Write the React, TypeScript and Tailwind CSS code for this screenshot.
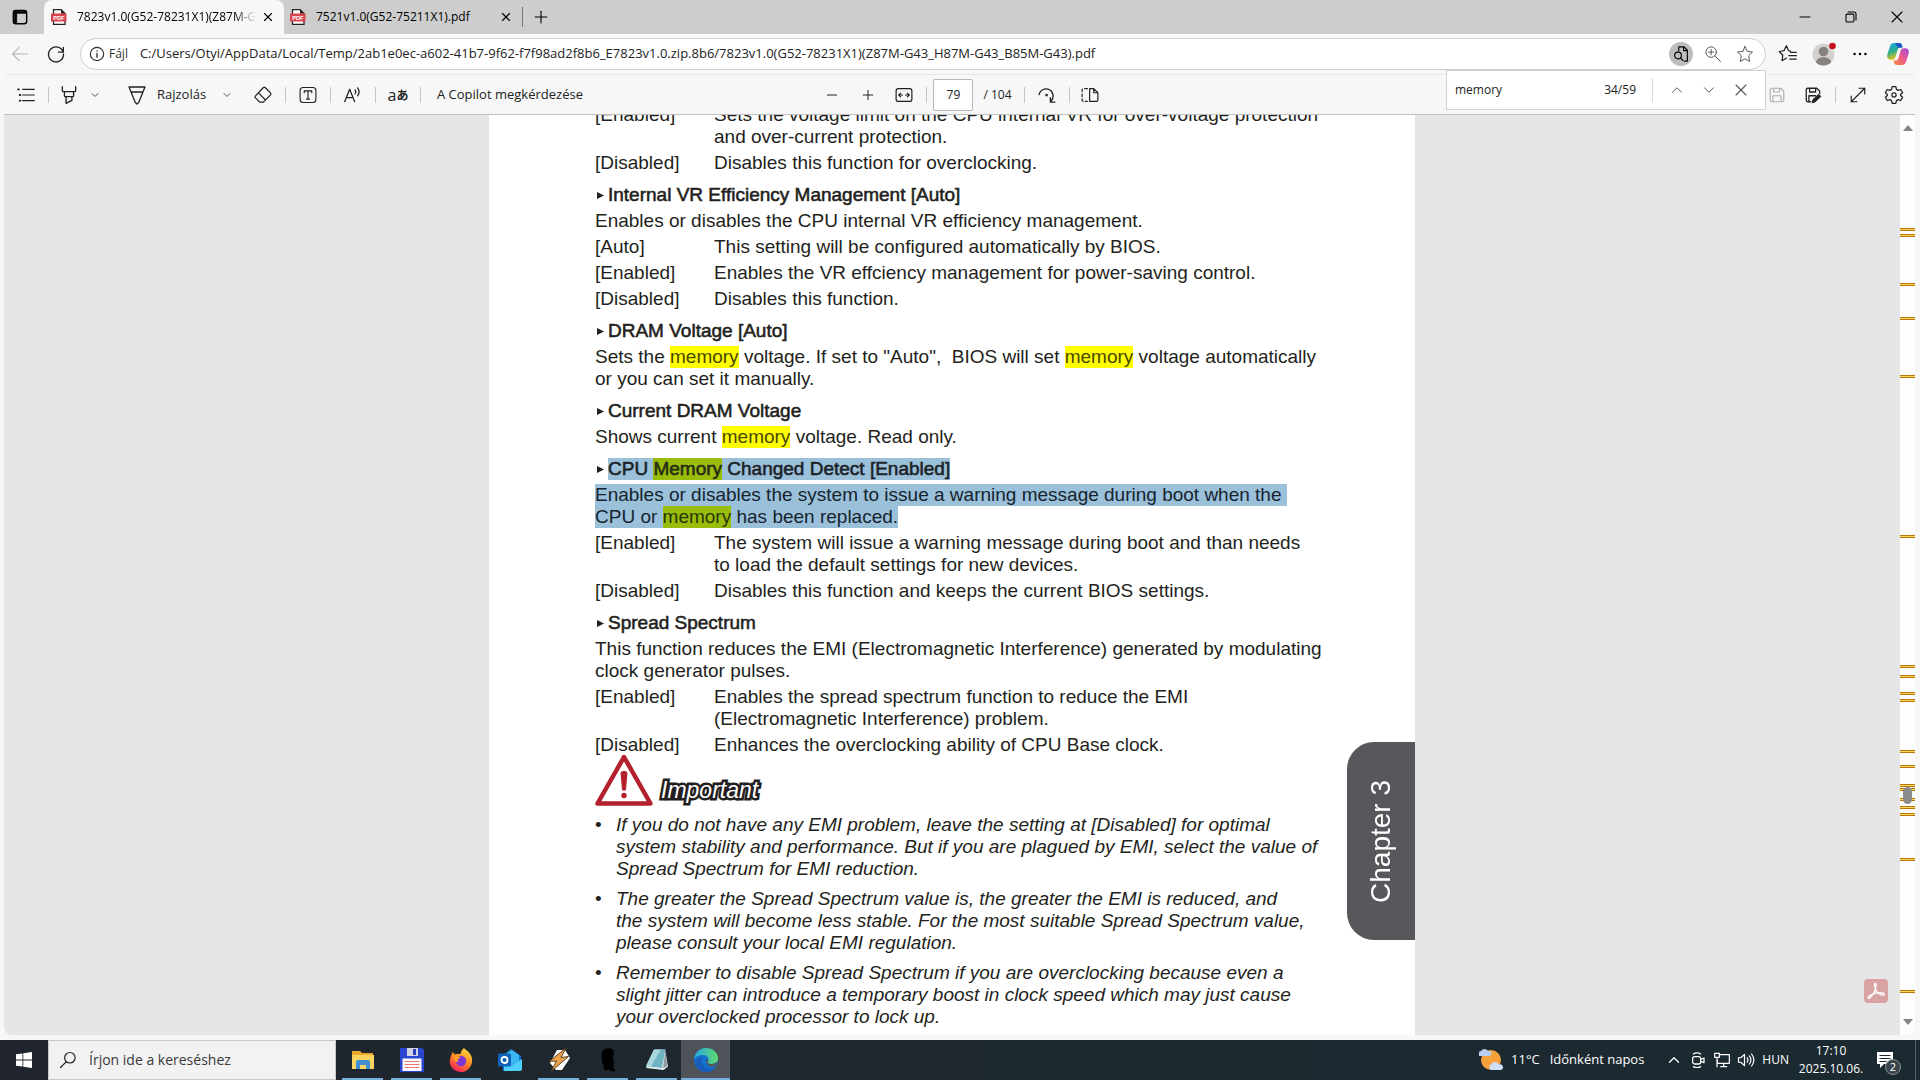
import type { ReactNode } from "react";
import { ChevronDown, ChevronUp, Minus, Plus, X } from "lucide-react";

const scrollMarks = [
	12.3, 12.9, 18.3, 22, 28.3, 45.7, 59.8, 60.9, 62.7, 63.5, 69, 70.7, 72.7, 73.2, 74.2, 75.1, 75.9,
	80.8, 95.1,
];

const notes = [
	[
		"If you do not have any EMI problem, leave the setting at [Disabled] for optimal",
		"system stability and performance. But if you are plagued by EMI, select the value of",
		"Spread Spectrum for EMI reduction.",
	],
	[
		"The greater the Spread Spectrum value is, the greater the EMI is reduced, and",
		"the system will become less stable. For the most suitable Spread Spectrum value,",
		"please consult your local EMI regulation.",
	],
	[
		"Remember to disable Spread Spectrum if you are overclocking because even a",
		"slight jitter can introduce a temporary boost in clock speed which may just cause",
		"your overclocked processor to lock up.",
	],
];

function Stroke({ children, className = "size-6" }: { children: ReactNode; className?: string }) {
	return (
		<svg
			viewBox="0 0 24 24"
			fill="none"
			stroke="currentColor"
			strokeWidth="1.3"
			strokeLinecap="round"
			strokeLinejoin="round"
			className={`shrink-0 ${className}`}
			aria-hidden="true"
		>
			{children}
		</svg>
	);
}

function IconButton({
	label,
	className = "w-11",
	children,
}: {
	label: string;
	className?: string;
	children: ReactNode;
}) {
	return (
		<button
			type="button"
			aria-label={label}
			className={`flex shrink-0 items-center justify-center ${className}`}
		>
			{children}
		</button>
	);
}

function Separator() {
	return <span className="h-4 w-px shrink-0 bg-[#c4c4c4]" />;
}

function PdfIcon() {
	return (
		<svg viewBox="0 0 16 16" className="size-4 shrink-0" aria-hidden="true">
			<path d="M2.5 .7h7.7L14 4.5v10.8H2.5z" fill="#fff" stroke="#222" strokeWidth="1.3" />
			<path d="M10 .7v4h4z" fill="#222" />
			<rect x="0" y="4.5" width="15.5" height="8" rx=".6" fill="#d9434b" />
			<text
				x="7.8"
				y="10.7"
				textAnchor="middle"
				fontSize="5.6"
				fontWeight="700"
				fontFamily="Liberation Sans"
				fill="#fff"
			>
				PDF
			</text>
		</svg>
	);
}

function TabBar() {
	return (
		<div className="flex h-[34px] bg-[#cdcdcd]">
			<IconButton label="Lapok menü" className="w-11 pr-1">
				<Stroke className="size-5">
					<rect x="4" y="4" width="16" height="16" rx="3" strokeWidth="1.7" />
					<path d="M5 5h14v2.5H5zM5 6h3v13H5z" fill="currentColor" strokeWidth="1" />
				</Stroke>
			</IconButton>
			<div className="flex w-60 items-center rounded-t-lg bg-[#f7f7f7] pr-1 pl-[7px]">
				<PdfIcon />
				<span className="ml-2.5 flex-1 overflow-hidden text-xs whitespace-nowrap [mask-image:linear-gradient(to_right,#000_88%,transparent)]">
					7823v1.0(G52-78231X1)(Z87M-G43)
				</span>
				<IconButton label="Lap bezárása" className="w-6">
					<X className="size-3.5" strokeWidth={2} />
				</IconButton>
			</div>
			<div className="flex w-[238px] items-center pr-1 pl-[6px]">
				<PdfIcon />
				<span className="ml-2.5 flex-1 text-xs whitespace-nowrap">7521v1.0(G52-75211X1).pdf</span>
				<IconButton label="Lap bezárása" className="w-6">
					<X className="size-3.5" strokeWidth={2} />
				</IconButton>
			</div>
			<div className="flex items-center">
				<span className="h-5 w-px bg-[#777]" />
				<IconButton label="Új lap" className="w-9">
					<Plus className="size-5" strokeWidth={1.3} />
				</IconButton>
			</div>
			<div className="ml-auto flex">
				<IconButton label="Kis méret" className="w-[46px]">
					<Stroke className="size-5">
						<path d="M6 12h12" />
					</Stroke>
				</IconButton>
				<IconButton label="Előző méret" className="w-[46px]">
					<Stroke className="size-5">
						<rect x="6" y="8.500" width="9.500" height="9.500" rx="1.500" />
						<path d="M8.500 6h7a2.500 2.500 0 0 1 2.500 2.500v7" />
					</Stroke>
				</IconButton>
				<IconButton label="Bezárás" className="w-[46px]">
					<Stroke className="size-5">
						<path d="M6 6l12 12M18 6L6 18" />
					</Stroke>
				</IconButton>
			</div>
		</div>
	);
}

function CopilotLogo() {
	return (
		<svg viewBox="0 0 24 24" className="size-6" aria-hidden="true">
			<defs>
				<linearGradient id="cp1" x1="0" y1="0" x2="0.3" y2="1">
					<stop offset="0" stopColor="#1aa7e8" />
					<stop offset=".55" stopColor="#2cae8d" />
					<stop offset="1" stopColor="#e8c21c" />
				</linearGradient>
				<linearGradient id="cp2" x1="1" y1="0" x2="0" y2="1">
					<stop offset="0" stopColor="#a04be0" />
					<stop offset=".5" stopColor="#ee5a8c" />
					<stop offset="1" stopColor="#f78a3a" />
				</linearGradient>
			</defs>
			<path
				d="M16.500 5.500 15.800 3A2.600 2.600 0 0 0 13.300 1.100H7.600A3.600 3.600 0 0 0 4.200 3.600L1.500 12c-1.100 3.600.5 5.700 3.300 5.700h1.600a3 3 0 0 0 2.900-2.200L12 6.800A2 2 0 0 1 14 5.500z"
				fill="url(#cp1)"
			/>
			<path d="M9 1.100h4.300A2.600 2.600 0 0 1 15.800 3l.8 2.500H14a2 2 0 0 0-1.500.7z" fill="#1e50c8" />
			<path
				d="M7.500 18.500 8.200 21a2.600 2.600 0 0 0 2.500 1.900h5.700a3.600 3.600 0 0 0 3.400-2.500l2.700-8.400c1.100-3.600-.5-5.700-3.300-5.700h-1.600a3 3 0 0 0-2.900 2.200L12 17.200a2 2 0 0 1-2 1.300z"
				fill="url(#cp2)"
			/>
		</svg>
	);
}

function AddressBar() {
	return (
		<div className="flex h-10 items-center">
			<IconButton label="Vissza" className="w-10 text-[#b5b5b5]">
				<Stroke className="size-5">
					<path d="M21 12H3M11 4l-8 8 8 8" />
				</Stroke>
			</IconButton>
			<IconButton label="Frissítés" className="w-8 text-[#222]">
				<Stroke className="size-5">
					<path d="M20.500 9.500A9 9 0 1 0 21 12M20.800 4v5.700h-5.700" strokeWidth="1.600" />
				</Stroke>
			</IconButton>
			<div className="ml-2 flex h-8 flex-1 items-center rounded-full border border-[#cfcfcf] bg-white pr-1">
				<button type="button" className="flex items-center pl-2 text-xs text-[#333]">
					<Stroke className="size-4">
						<circle cx="12" cy="12" r="10" strokeWidth="1.700" />
						<path d="M12 11v6M12 7.500v.2" strokeWidth="2" />
					</Stroke>
					<span className="ml-1">Fájl</span>
				</button>
				<input
					aria-label="Cím- és keresősáv"
					className="ml-3 min-w-0 flex-1 text-[13px] text-[#222] outline-none"
					defaultValue="C:/Users/Otyi/AppData/Local/Temp/2ab1e0ec-a602-41b7-9f62-f7f98ad2f8b6_E7823v1.0.zip.8b6/7823v1.0(G52-78231X1)(Z87M-G43_H87M-G43_B85M-G43).pdf"
				/>
				<IconButton label="Keresés a fájlban" className="w-8">
					<span className="flex size-6 items-center justify-center rounded-full bg-[#bdbdbd]">
						<Stroke className="size-[18px]">
							<path d="M9 8V2.500h7L20.500 7v14.500H17M15.500 3v4.500H20" strokeWidth="1.500" />
							<circle cx="8" cy="14" r="4.500" strokeWidth="1.500" />
							<path d="M11.500 17.500 15 21" strokeWidth="1.500" />
						</Stroke>
					</span>
				</IconButton>
				<IconButton label="Nagyítás" className="w-8 text-[#555]">
					<Stroke className="size-[18px]">
						<circle cx="9.500" cy="9.500" r="7" />
						<path d="M14.500 14.500 22 22M9.500 6v7M6 9.500h7" />
					</Stroke>
				</IconButton>
				<IconButton label="Kedvencekhez adás" className="w-8 text-[#555]">
					<Stroke className="size-[18px]">
						<path d="m12 2 3 6.500 7 .9-5.100 4.900L18.200 22 12 18.300 5.800 22l1.300-7.700L2 9.400l7-.9z" />
					</Stroke>
				</IconButton>
			</div>
			<div className="ml-1 flex">
				<IconButton label="Kedvencek" className="w-9 text-[#222]">
					<Stroke className="size-5">
						<path
							d="M15 8.500 12.800 8 10 2 7.200 8 1.500 9l4.300 4.500L4.800 20l5.200-3M15 10h7M13 14h9M14 18h8"
							strokeWidth="1.500"
						/>
					</Stroke>
				</IconButton>
				<IconButton label="Profil" className="w-9">
					<svg viewBox="0 0 24 24" className="size-6" aria-hidden="true">
						<circle cx="11.500" cy="12.500" r="11" fill="#d4d2cf" />
						<circle cx="11.500" cy="9.500" r="4.800" fill="#85827f" />
						<path d="M4 20.500c0-7 15-7 15 0-4 4-11 4-15 0z" fill="#85827f" />
						<circle cx="20.500" cy="4" r="3.300" fill="#c50f1f" />
					</svg>
				</IconButton>
				<IconButton label="Beállítások és egyebek" className="w-9">
					<svg viewBox="0 0 24 24" className="size-5" aria-hidden="true">
						<circle cx="5.500" cy="12" r="1.500" />
						<circle cx="12" cy="12" r="1.500" />
						<circle cx="18.500" cy="12" r="1.500" />
					</svg>
				</IconButton>
				<IconButton label="Copilot" className="mr-0.5 w-10">
					<CopilotLogo />
				</IconButton>
			</div>
		</div>
	);
}

function PdfToolbar() {
	return (
		<div className="flex h-[39px] items-stretch text-[#222]">
			<div className="flex flex-1 items-center">
				<IconButton label="Tartalomjegyzék">
					<Stroke className="size-[18px]">
						<path d="M7.500 4.500H23M7.500 12H23M7.500 19.500H23" strokeWidth="1.600" />
						<path d="M1.500 4.500h1M3.500 12h1M3.500 19.500h1" strokeWidth="2.400" />
					</Stroke>
				</IconButton>
				<Separator />
				<IconButton label="Kiemelés" className="w-10">
					<Stroke className="size-5">
						<path
							d="M4 2v4.500q0 1.500 1.500 1.500h13q1.500 0 1.500-1.500V2M6.500 8v5q0 1 1 1h9q1 0 1-1V8M8.500 14v8l7-3.500V14"
							strokeWidth="1.600"
						/>
					</Stroke>
				</IconButton>
				<ChevronDown className="size-3 text-[#555]" strokeWidth={2} />
				<button type="button" className="ml-6 flex items-center text-[13px]">
					<Stroke className="size-6">
						<path d="M4 4h16l-6.300 15.500L12 21l-1.700-1.500L4 4M6 9h12" />
					</Stroke>
					<span className="ml-2 w-16 text-left">Rajzolás</span>
				</button>
				<ChevronDown className="size-3 text-[#555]" strokeWidth={2} />
				<IconButton label="Radír" className="ml-2 w-11">
					<Stroke className="size-5">
						<path
							d="m14.500 3 6.500 6.500c.8.800.8 1.600 0 2.400L12.500 20.500H8L3 15.500c-.8-.8-.8-1.600 0-2.400L12.500 3q1-.8 2 0zM6.500 9.500l8.500 8.500"
							strokeWidth="1.500"
						/>
					</Stroke>
				</IconButton>
				<Separator />
				<IconButton label="Szöveg hozzáadása">
					<Stroke className="size-[18px]">
						<rect x="1.500" y="2" width="21" height="20" rx="4" strokeWidth="1.500" />
						<path d="M7 9V6.500h10V9M12 6.500v11M10 17.500h4" strokeWidth="1.500" />
					</Stroke>
				</IconButton>
				<Separator />
				<IconButton label="Felolvasás">
					<Stroke className="size-5">
						<path d="m2 20 6-15 6 15M4 15h8" strokeWidth="1.500" />
						<path d="M14.500 6c1 1.300 1 3 0 4.500M17.500 3.500c2.300 3 2.300 6.500 0 9.500" strokeWidth="1.500" />
					</Stroke>
				</IconButton>
				<Separator />
				<IconButton label="Fordítás">
					<span className="flex items-center text-base leading-none">
						a
						<span className="font-['Noto_Sans_CJK_JP',sans-serif] text-xs leading-none font-bold">
							あ
						</span>
					</span>
				</IconButton>
				<Separator />
				<button type="button" className="ml-4 text-[13px]">
					A Copilot megkérdezése
				</button>
			</div>
			<div className="ml-2 flex items-center">
				<IconButton label="Kicsinyítés" className="w-9">
					<Minus className="size-4" strokeWidth={1.5} />
				</IconButton>
				<IconButton label="Nagyítás" className="w-9">
					<Plus className="size-4" strokeWidth={1.5} />
				</IconButton>
				<IconButton label="Szélességhez igazítás" className="mr-1 w-9">
					<Stroke className="size-[18px]">
						<rect x="1.500" y="3.500" width="21" height="17" rx="3" strokeWidth="1.600" />
						<path d="M10 12H5.500m2-2.500L5 12l2.500 2.500M14 12h4.500m-2-2.500L19 12l-2.500 2.500" strokeWidth="1.600" />
					</Stroke>
				</IconButton>
				<Separator />
				<input
					aria-label="Oldalszám"
					defaultValue="79"
					className="ml-1.5 h-8 w-10 rounded-xs border border-[#b8b8b8] bg-white text-center text-xs outline-none"
				/>
				<span className="mr-3 ml-2.5 text-xs">/ 104</span>
				<Separator />
				<IconButton label="Forgatás">
					<Stroke className="size-5">
						<path d="M2.500 11.500a8.500 8.500 0 1 1 14 8M16 15v5.500h5.500" strokeWidth="1.500" />
						<circle cx="11.500" cy="12" r="1" />
					</Stroke>
				</IconButton>
				<Separator />
				<IconButton label="Oldalnézet" className="w-10">
					<Stroke className="size-[18px]">
						<path d="M11.500 3.500v17h9a2 2 0 0 0 2-2V9L17 3.500zM17 3.500V9h5.500" strokeWidth="1.600" />
						<path d="M8.500 3.500H3.500a2 2 0 0 0-2 2v13a2 2 0 0 0 2 2h5" strokeDasharray="3.500 3" strokeWidth="1.600" />
					</Stroke>
				</IconButton>
			</div>
			<div className="flex flex-1 items-center justify-end pr-1">
				<IconButton label="Mentés" className="w-9 text-[#b0b0b0]">
					<Stroke className="size-[18px]">
						<path
							d="M3 5a2 2 0 0 1 2-2h12l4 4v12a2 2 0 0 1-2 2H5a2 2 0 0 1-2-2zM7.500 3v5h8V3M6.500 21v-8h11v8"
							strokeWidth="1.600"
						/>
					</Stroke>
				</IconButton>
				<IconButton label="Mentés másként" className="mr-1 w-9">
					<Stroke className="size-[18px]">
						<path
							d="M9 21H5a2 2 0 0 1-2-2V5a2 2 0 0 1 2-2h12l4 4v3M7.500 3v5h8V3M6.500 21v-8h9"
							strokeWidth="1.700"
						/>
						<path d="m11 22 1-4 7.500-7 3 3L15 21z" fill="currentColor" />
					</Stroke>
				</IconButton>
				<Separator />
				<IconButton label="Teljes képernyő" className="ml-1 w-9">
					<Stroke className="size-[18px]">
						<path d="M3 21 21 3M13.500 3H21v7.500M3 13.500V21h7.500" strokeWidth="1.600" />
					</Stroke>
				</IconButton>
				<IconButton label="Beállítások" className="w-9">
					<Stroke className="size-5">
						<path
							d="M9.800 2h4.400l.7 3.200 2.100 1.200 3.100-1 2.200 3.800-2.400 2.200v1.200l2.400 2.200-2.200 3.800-3.100-1-2.100 1.200-.7 3.200H9.800l-.7-3.200L7 17.600l-3.100 1-2.200-3.800 2.400-2.200v-1.200L1.700 9.200l2.200-3.800 3.100 1 2.100-1.200z"
							strokeWidth="1.500"
						/>
						<circle cx="12" cy="12" r="2.500" strokeWidth="1.500" />
					</Stroke>
				</IconButton>
			</div>
		</div>
	);
}

function FindBar() {
	return (
		<div className="absolute top-[70px] right-[154px] flex h-10 w-80 items-center border border-[#d2d2d2] bg-white pl-2 text-xs text-[#222]">
			<input
				aria-label="Keresés az oldalon"
				defaultValue="memory"
				className="w-36 flex-1 outline-none"
			/>
			<span className="mr-4">34/59</span>
			<span className="mr-2 h-6 w-px bg-[#dadada]" />
			<IconButton label="Előző találat" className="w-8 text-[#555]">
				<ChevronUp className="size-[18px]" strokeWidth={1.3} />
			</IconButton>
			<IconButton label="Következő találat" className="w-8 text-[#555]">
				<ChevronDown className="size-[18px]" strokeWidth={1.3} />
			</IconButton>
			<IconButton label="Keresés bezárása" className="mr-2 w-8 text-[#555]">
				<X className="size-5" strokeWidth={1.3} />
			</IconButton>
		</div>
	);
}

function Heading({ children }: { children: ReactNode }) {
	return (
		<h2 className="mt-2.5 flex items-center [-webkit-text-stroke:0.03em_#231f20]">
			<svg viewBox="0 0 8 8" className="mr-1 ml-0.5 size-[7px]" aria-hidden="true">
				<path d="M0 0l8 4-8 4z" fill="#231f20" />
			</svg>
			{children}
		</h2>
	);
}

function Option({ name, children }: { name: string; children: ReactNode }) {
	return (
		<div className="mt-1 flex">
			<dt className="w-[119px] shrink-0">[{name}]</dt>
			<dd>{children}</dd>
		</div>
	);
}

function Hit({ children }: { children: ReactNode }) {
	return <mark className="inline-block bg-[#ffff00] text-[#4a4600]">{children}</mark>;
}

function SelectedHit({ children }: { children: ReactNode }) {
	return <mark className="inline-block bg-[#9abd0c] text-[#28350a]">{children}</mark>;
}

function Selected({ children }: { children: ReactNode }) {
	return <span className="inline-block bg-[#9bc0da] text-[#16242f]">{children}</span>;
}

function DocumentPage() {
	return (
		<article className="relative mx-auto h-full w-[926px] overflow-hidden bg-white pr-20 pl-[106px] font-['Liberation_Sans',sans-serif] text-[19px] leading-[22px] whitespace-nowrap text-[#231f20]">
			<dl className="-mt-[15px]">
				<Option name="Enabled">
					Sets the voltage limit on the CPU internal VR for over-voltage protection
					<br />
					and over-current protection.
				</Option>
				<Option name="Disabled">Disables this function for overclocking.</Option>
			</dl>

			<Heading>Internal VR Efficiency Management [Auto]</Heading>
			<p className="mt-1">Enables or disables the CPU internal VR efficiency management.</p>
			<dl>
				<Option name="Auto">This setting will be configured automatically by BIOS.</Option>
				<Option name="Enabled">Enables the VR effciency management for power-saving control.</Option>
				<Option name="Disabled">Disables this function.</Option>
			</dl>

			<Heading>DRAM Voltage [Auto]</Heading>
			<p className="mt-1">
				Sets the <Hit>memory</Hit> voltage. If set to "Auto",&nbsp; BIOS will set <Hit>memory</Hit>{" "}
				voltage automatically
				<br />
				or you can set it manually.
			</p>

			<Heading>Current DRAM Voltage</Heading>
			<p className="mt-1">
				Shows current <Hit>memory</Hit> voltage. Read only.
			</p>

			<Heading>
				<Selected>
					CPU <SelectedHit>Memory</SelectedHit> Changed Detect [Enabled]
				</Selected>
			</Heading>
			<p className="mt-1">
				<Selected>
					Enables or disables the system to issue a warning message during boot when the&nbsp;
				</Selected>
				<br />
				<Selected>
					CPU or <SelectedHit>memory</SelectedHit> has been replaced.
				</Selected>
			</p>
			<dl>
				<Option name="Enabled">
					The system will issue a warning message during boot and than needs
					<br />
					to load the default settings for new devices.
				</Option>
				<Option name="Disabled">Disables this function and keeps the current BIOS settings.</Option>
			</dl>

			<Heading>Spread Spectrum</Heading>
			<p className="mt-1">
				This function reduces the EMI (Electromagnetic Interference) generated by modulating
				<br />
				clock generator pulses.
			</p>
			<dl>
				<Option name="Enabled">
					Enables the spread spectrum function to reduce the EMI
					<br />
					(Electromagnetic Interference) problem.
				</Option>
				<Option name="Disabled">Enhances the overclocking ability of CPU Base clock.</Option>
			</dl>

			<div className="mb-2 flex h-[50px] items-end">
				<svg viewBox="0 0 58 52" className="h-[52px] w-[58px]" aria-hidden="true">
					<path
						d="M29 3 2.500 49.500h53z"
						fill="none"
						stroke="#b3202e"
						strokeWidth="4.500"
						strokeLinejoin="round"
					/>
					<path d="M26 18.500q3-2.500 6 0L30.500 36h-3z" fill="#b3202e" stroke="#b3202e" strokeLinejoin="round" />
					<circle cx="29" cy="41.500" r="2.700" fill="#b3202e" />
				</svg>
				<strong className="ml-2 text-[23px] leading-8 font-normal text-white italic [-webkit-text-stroke:5px_#231f20] [paint-order:stroke_fill]">
					Important
				</strong>
			</div>

			<ul className="space-y-2 italic">
				{notes.map((lines) => (
					<li key={lines[0]} className="flex">
						<span className="w-[21px] shrink-0 not-italic">•</span>
						<span>
							{lines.map((line) => (
								<span key={line} className="block">
									{line}
								</span>
							))}
						</span>
					</li>
				))}
			</ul>

			<aside className="absolute top-[627px] right-0 flex h-[198px] w-[68px] items-center justify-center rounded-l-[27px] bg-[#58585c]">
				<span className="rotate-180 text-[28px] text-white [writing-mode:vertical-rl]">
					Chapter 3
				</span>
			</aside>
		</article>
	);
}

function ScrollTrack() {
	return (
		<div className="relative w-[15px] shrink-0 bg-[#fdfdfd]">
			<svg viewBox="0 0 10 6" className="absolute top-2.5 left-[3px] h-1.5 w-2.5" aria-hidden="true">
				<path d="M0 6 5 0l5 6z" fill="#858585" />
			</svg>
			{scrollMarks.map((mark) => (
				<span
					key={mark}
					className="absolute inset-x-0 h-[3px] border-y border-[#b8770a] bg-[#ffd75a]"
					style={{ top: `${mark}%` }}
				/>
			))}
			<span className="absolute top-[73%] left-[3px] h-[17px] w-[9px] rounded-full bg-[#8b8b8b]" />
			<svg viewBox="0 0 10 6" className="absolute bottom-2.5 left-[3px] h-1.5 w-2.5" aria-hidden="true">
				<path d="M0 0l5 6 5-6z" fill="#858585" />
			</svg>
		</div>
	);
}

function Viewer() {
	return (
		<main className="mr-[5px] mb-[5px] ml-1 flex min-h-0 flex-1 overflow-hidden rounded-b-lg border-t border-[#c0c0c0] bg-[#e6e6e6]">
			<div className="relative min-w-0 flex-1">
				<DocumentPage />
				<button
					type="button"
					aria-label="Megnyitás Acrobatban"
					className="absolute right-3 bottom-8 size-6 rounded-sm bg-[#d9a3a3]"
				>
					<svg viewBox="0 0 24 24" fill="none" stroke="#fff" strokeWidth="1.400" aria-hidden="true">
						<path d="M11.500 4.500c-2 0-.6 5.500 1.500 8.300 2.500 3.200 7 4.200 7.200 2.400.3-2.200-7-1.600-10.700-.4-3.700 1.200-6.200 3.200-5.200 4.200 1.700 1.700 5.300-4.500 6.700-8 1-2.800 1.500-6.500.5-6.500z" />
					</svg>
				</button>
			</div>
			<ScrollTrack />
		</main>
	);
}

function ExplorerIcon() {
	return (
		<svg viewBox="0 0 24 24" className="size-6">
			<path d="M1 3h8l2 2h11v16H1z" fill="#e9a92b" />
			<path d="M1 7h22v14H1z" fill="#fcd462" />
			<path d="M5 21v-7a2 2 0 0 1 2-2h10a2 2 0 0 1 2 2v7h-4v-4H9v4z" fill="#3f8fd2" />
		</svg>
	);
}

function FloppyIcon() {
	return (
		<svg viewBox="0 0 24 24" className="size-6">
			<path d="M0 0h22l2 2v22H0z" fill="#2a45d0" />
			<path d="M7 0h11v8H7z" fill="#cfd3e2" />
			<path d="M13 1h3v6h-3z" fill="#2a3cc0" />
			<path d="M2.500 10.500h19V23h-19z" fill="#fff" />
			<path d="M4.500 13.500h15M4.500 16.500h15M4.500 19.500h15" stroke="#e77" strokeWidth="1.200" />
		</svg>
	);
}

function FirefoxIcon() {
	return (
		<svg viewBox="0 0 24 24" className="size-6">
			<defs>
				<linearGradient id="fx" x1=".8" y1="0" x2=".3" y2="1">
					<stop offset="0" stopColor="#ffe14a" />
					<stop offset=".5" stopColor="#ff8a1e" />
					<stop offset="1" stopColor="#f4215f" />
				</linearGradient>
			</defs>
			<path
				d="M15 0c2 2.500 6 4 7.500 8.500C25 17 19 24 12 24S-.5 18 1 11c.5-3 2-4.500 2.500-7L6 6.500C8 5 10 6 11.500 6 12 3.500 13 1.500 15 0z"
				fill="url(#fx)"
			/>
			<circle cx="12" cy="13" r="5.200" fill="#8036d4" />
			<path d="M4.500 9c3-2 6-1 7.500 1-3 0-4 2-2.500 4-3 .5-5-2-5-5z" fill="#ff9a22" />
		</svg>
	);
}

function OutlookIcon() {
	return (
		<svg viewBox="0 0 24 24" className="size-6">
			<path d="M4 8 13 1l10 7v13a2 2 0 0 1-2 2H5z" fill="#1371c8" />
			<path d="M8 5.500 14 2l7 5v7l-7 4-6-4z" fill="#3ab7f0" />
			<path d="m6 13 8 5 10-7v10a2 2 0 0 1-2 2H6z" fill="#4fd0fb" />
			<rect x="0" y="5.500" width="13" height="13" rx="1.500" fill="#0f62b8" />
			<circle cx="6.500" cy="12" r="3" fill="none" stroke="#fff" strokeWidth="1.800" />
		</svg>
	);
}

function WinampIcon() {
	return (
		<svg viewBox="0 0 24 24" className="size-6">
			<path d="M10 2h8l5 8-8 12H9l-6-7z" fill="#fff" />
			<path
				d="M19 0 2 13.500l7.500-.5L4 23.500 21.500 8.500 14 9.500z"
				fill="#eda04a"
				stroke="#4a3418"
				strokeWidth=".9"
			/>
		</svg>
	);
}

function SilhouetteIcon() {
	return (
		<svg viewBox="0 0 24 24" className="size-6">
			<path
				d="M8 1.500c3-2 8.500-2 9.500 1.500.8 2.500 0 4.500-.5 6.500-.5 2 1 3 1 5.500 0 2.500-1 3.500-.5 5.500l2 1-1 2-4-.5-1.500-2-2.500 1.500-3-1 .5-4.500c-2-.5-2.500-1.500-1.500-3L6 11.500C5 8 5.500 3 8 1.500z"
				fill="#000"
			/>
		</svg>
	);
}

function NotepadIcon() {
	return (
		<svg viewBox="0 0 24 24" className="size-6">
			<path d="m20 1.500 3 17-4.500 3.500L1 20l8-18z" fill="#e8eef0" />
			<path d="M9 1.500h11.500L17 20 1 18z" fill="#6fb4c2" />
			<path d="M9 1.500h7L6 18.600 1 18z" fill="#a9d7de" />
			<path d="m20.500 3 1.700 15-4.200 2.500z" fill="#8b999c" />
		</svg>
	);
}

function EdgeIcon() {
	return (
		<svg viewBox="0 0 24 24" className="size-6">
			<defs>
				<linearGradient id="ed" x1="0" y1=".4" x2="1" y2=".4">
					<stop offset="0" stopColor="#2aa7e6" />
					<stop offset="1" stopColor="#5ddc6c" />
				</linearGradient>
			</defs>
			<circle cx="12" cy="12" r="12" fill="#1172cf" />
			<path
				d="M0 11C1 4.500 6 0 12 0c7 0 12 5 12 10 0 4-3 6-6.500 6-3 0-4.500-1.200-3.500-2.500 2-3-1-6.500-5-6.500-4 0-8 2-9 4z"
				fill="url(#ed)"
			/>
			<path d="M9 9c-3 5 0 11 6 12 3 .4 6-1 7-2.500-2 3.500-5 5.500-9 5.500C6 24 1 20 1 14c1-3 4-5 8-5z" fill="#1b5cb8" />
			<path d="M14 13.500c-1 1.300.5 2.500 3.500 2.500 2 0 4-.8 5.200-2 1.300-.5-.2 3.500-2.200 4.500-5.500 1.500-9.500-2.500-8-7 1.500 0 2.200.8 1.500 2z" fill="#55565c" />
		</svg>
	);
}

const apps = [
	{ name: "Fájlkezelő", icon: ExplorerIcon, running: true },
	{ name: "Total Commander", icon: FloppyIcon, running: true },
	{ name: "Firefox", icon: FirefoxIcon, running: true },
	{ name: "Outlook", icon: OutlookIcon, running: false },
	{ name: "Winamp", icon: WinampIcon, running: true },
	{ name: "Profilkép", icon: SilhouetteIcon, running: true },
	{ name: "Jegyzettömb", icon: NotepadIcon, running: true },
	{ name: "Microsoft Edge", icon: EdgeIcon, running: true, active: true },
];

function Taskbar() {
	return (
		<footer className="flex h-10 shrink-0 bg-linear-to-r from-[#20252d] to-[#1b2a31] text-white">
			<IconButton label="Start" className="w-12">
				<svg viewBox="0 0 16 16" className="size-4" fill="#fff" aria-hidden="true">
					<path d="M0 2.300 6.500 1.400v6.200H0zM7.300 1.300 16 0v7.600H7.300zM0 8.400h6.500v6.200L0 13.700zM7.300 8.400H16V16l-8.700-1.300z" />
				</svg>
			</IconButton>
			<label className="flex w-72 items-center border border-[#c8c8c8] bg-[#f2f2f2] pl-2.5 text-[#222]">
				<Stroke className="size-[18px]">
					<circle cx="14.500" cy="9" r="7" strokeWidth="1.600" />
					<path d="M9.500 14.500 2 22" strokeWidth="1.600" />
				</Stroke>
				<input
					aria-label="Keresés"
					placeholder="Írjon ide a kereséshez"
					className="ml-3 min-w-0 flex-1 text-sm outline-none placeholder:text-[#3a3a3a]"
				/>
			</label>
			<nav className="ml-0.5 flex">
				{apps.map((app) => (
					<button
						key={app.name}
						type="button"
						aria-label={app.name}
						className={`relative flex w-[49px] items-center justify-center ${app.active ? "bg-[#505259]" : ""}`}
					>
						<app.icon />
						{app.running && (
							<span
								className={`absolute bottom-0 h-0.5 bg-[#76b0dd] ${app.active ? "inset-x-0" : "inset-x-1"}`}
							/>
						)}
					</button>
				))}
			</nav>
			<div className="ml-auto flex items-center">
				<button type="button" className="flex items-center text-[13px]">
					<svg viewBox="0 0 24 24" className="size-6" aria-hidden="true">
						<circle cx="12" cy="12" r="10" fill="#f7a13a" />
						<path d="M0 8a3 3 0 0 1 2-5 4 4 0 0 1 7 0 2.700 2.700 0 0 1 2 5z" fill="#b9cff0" />
						<path d="M12 22a3 3 0 0 1 0-5.500 4.500 4.500 0 0 1 8 0 2.800 2.800 0 0 1 2 5.500z" fill="#cfdff7" />
					</svg>
					<span className="ml-2">11°C</span>
					<span className="ml-2.5">Időnként napos</span>
				</button>
				<div className="ml-[18px] flex items-center">
					<IconButton label="Rejtett ikonok" className="w-6">
						<ChevronUp className="size-[18px]" strokeWidth={1.6} />
					</IconButton>
					<IconButton label="Értekezlet" className="w-6">
						<Stroke className="size-4">
							<rect x="4" y="7" width="12" height="11" rx="3" strokeWidth="1.900" />
							<path d="m16 11 5-2v7l-5-2M5 3c3-2 8-2 11 0M5 22c3 1.500 8 1.500 11 0" strokeWidth="1.900" />
						</Stroke>
					</IconButton>
					<IconButton label="Hálózat" className="w-6">
						<Stroke className="size-4">
							<path d="M9 4h14v13H5v-5M10 22h9M14.500 17v5M1 2h7v6H1zM4.500 8v14" strokeWidth="1.800" />
						</Stroke>
					</IconButton>
					<IconButton label="Hangerő" className="w-6">
						<Stroke className="size-[18px]">
							<path
								d="M2 9h3l5-4.500v15L5 15H2zM13.500 9q2 3 0 6M16.500 6.500q4 5.500 0 11M19.500 4q6 8 0 16"
								strokeWidth="1.600"
							/>
						</Stroke>
					</IconButton>
				</div>
				<span className="ml-1 text-xs">HUN</span>
				<div className="ml-2 w-[68px] text-center text-xs leading-[18px]">
					<div>17:10</div>
					<div>2025.10.06.</div>
				</div>
				<button type="button" aria-label="Értesítések" className="relative ml-1 h-10 w-10">
					<svg viewBox="0 0 40 40" className="size-10" aria-hidden="true">
						<path d="M8 12h16v12H15l-4 4v-4H8z" fill="#fff" />
						<path d="M10.500 15.500h11M10.500 18.500h11M10.500 21.500h7" stroke="#1e282f" strokeWidth="1.200" />
					</svg>
					<span className="absolute top-[19px] left-4 flex size-4 items-center justify-center rounded-full border border-[#8a9196] bg-[#3c454b] text-[11px]">
						2
					</span>
				</button>
				<span className="ml-1.5 h-10 w-px bg-[#56616a]" />
				<span className="w-1" />
			</div>
		</footer>
	);
}

export default function App() {
	return (
		<div className="relative flex h-screen flex-col overflow-hidden bg-[#f7f7f7] font-['Open_Sans','Noto_Sans',sans-serif] text-black">
			<TabBar />
			<AddressBar />
			<div className="mx-1 rounded-t-lg border-t border-[#e6e6e6]">
				<PdfToolbar />
			</div>
			<Viewer />
			<Taskbar />
			<FindBar />
		</div>
	);
}
